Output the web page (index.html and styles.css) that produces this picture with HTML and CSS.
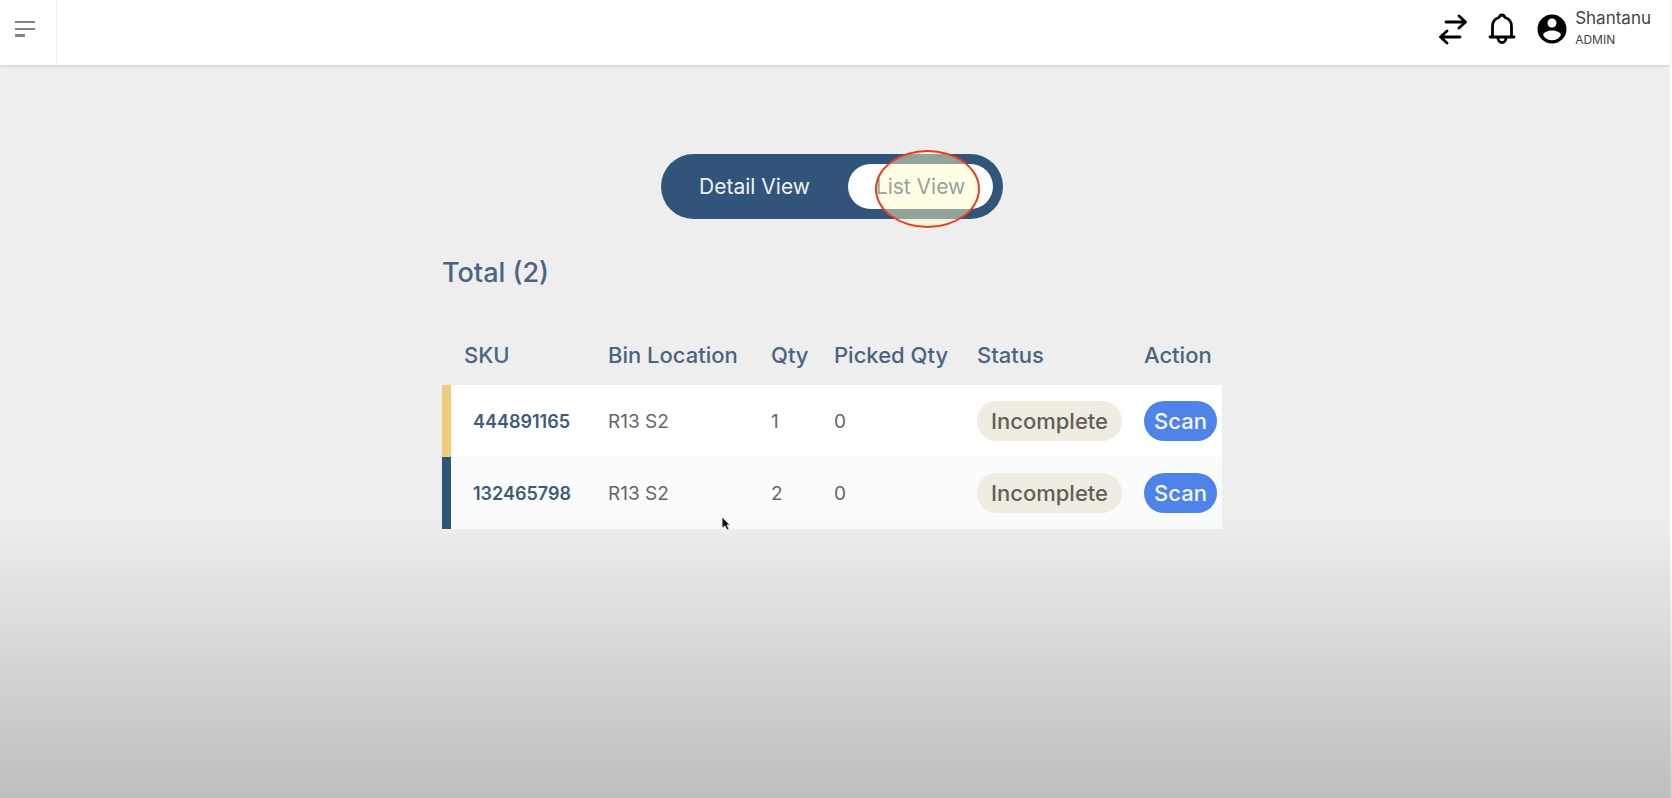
FILE: index.html
```
<!DOCTYPE html>
<html lang="en">
<head>
  <meta charset="UTF-8" />
  <meta name="viewport" content="width=device-width, initial-scale=1.0"/>
  <title>Picklist</title>
  <link rel="stylesheet" href="styles.css">
</head>
<body>

<div class="page">
  <header class="topbar">
    <button type="button" class="menu-btn" aria-label="Menu">
      <svg width="20" height="18" viewBox="0 0 20 18" fill="#858585">
        <path d="M0 1h20v2H0zM0 8h20v2H0zM0 14h10v3H0z"/>
      </svg>
    </button>
    <div class="topbar-right">
      <button type="button" class="icon-btn" aria-label="Switch">
        <svg width="28" height="32" viewBox="0 0 28 32" fill="none" stroke="#000" stroke-width="2.8" stroke-linecap="round" stroke-linejoin="round">
          <path d="M7 9h19M20 3l6.500 6-6.500 6M21 24H2M8 18l-6.500 6L8 30"/>
        </svg>
      </button>
      <button type="button" class="icon-btn" aria-label="Notifications">
        <svg width="28" height="32" viewBox="0 0 28 32" fill="none" stroke="#000" stroke-width="2.8" stroke-linecap="round" stroke-linejoin="round">
          <path d="M2 24h24M4.500 24V13.500C4.500 8.500 7.500 5.500 11 4.500Q12 2 14 2t3 2.500c3.500 1 6.500 4 6.500 9V24"/>
          <path d="M10 25c0 6 8 6 8 0"/>
        </svg>
      </button>
      <div class="user">
        <svg width="30" height="32" viewBox="0 0 30 32">
          <circle cx="15" cy="16" r="14.500" fill="#000"/>
          <circle cx="15" cy="10" r="4.500" fill="#fff"/>
          <path d="M6 22c1.500-6 16.500-6 18 0-3.500 7-14.500 7-18 0z" fill="#fff"/>
        </svg>
        <div class="user-text">
          <span class="user-name">Shantanu</span>
          <span class="user-role">ADMIN</span>
        </div>
      </div>
    </div>
  </header>

  <main class="content">
    <div class="view-toggle">
      <button type="button" class="view-btn">Detail View</button>
      <button type="button" class="view-btn active">List View</button>
      <span class="highlight"></span>
    </div>

    <section class="picklist">
      <h2>Total (2)</h2>
      <table>
        <thead>
          <tr>
            <th class="col-sku">SKU</th>
            <th class="col-bin">Bin Location</th>
            <th class="col-qty">Qty</th>
            <th class="col-picked">Picked Qty</th>
            <th class="col-status">Status</th>
            <th class="col-action">Action</th>
          </tr>
        </thead>
        <tbody>
          <tr class="row-yellow">
            <td>444891165</td>
            <td>R13 S2</td>
            <td>1</td>
            <td>0</td>
            <td><span class="status">Incomplete</span></td>
            <td><button type="button" class="scan-btn">Scan</button></td>
          </tr>
          <tr class="row-blue">
            <td>132465798</td>
            <td>R13 S2</td>
            <td>2</td>
            <td>0</td>
            <td><span class="status">Incomplete</span></td>
            <td><button type="button" class="scan-btn">Scan</button></td>
          </tr>
        </tbody>
      </table>
      <svg class="cursor" width="10" height="16" viewBox="0 0 10 16">
        <path d="M1 1v11l3-2 2 4 2-1-2-4h3z" fill="#111" stroke="#ddd" stroke-width="1"/>
      </svg>
    </section>
  </main>
</div>
<div class="fade"></div>

</body>
</html>
```
FILE: styles.css
```
* {
  box-sizing: border-box;
}
body {
  margin: 0;
  font-family: Inter, "Open Sans", sans-serif;
  background: #fff;
  color: #666;
}
button {
  font-family: inherit;
  border: none;
  background: none;
  padding: 0;
  cursor: pointer;
}
svg {
  display: block;
}
.page {
  display: flex;
  flex-direction: column;
  min-height: 100vh;
  margin-right: 2px;
}
.topbar {
  display: flex;
  justify-content: space-between;
  height: 65px;
  background: #fff;
  box-shadow: 0 1px 3px rgba(0,0,0,0.14);
  z-index: 1;
}
.menu-btn {
  display: flex;
  justify-content: center;
  width: 57px;
  padding: 20px 6px 0 0;
  border-right: 1px solid #f0f0f0;
}
.topbar-right {
  display: flex;
  align-items: flex-start;
  gap: 21px;
  padding: 8px 19px 0 0;
}
.icon-btn {
  padding-top: 5px;
}
.user {
  display: flex;
  gap: 8px;
}
.user svg {
  margin-top: 5px;
}
.user-text {
  display: flex;
  flex-direction: column;
  gap: 4px;
  color: #444;
}
.user-name {
  font-size: 17px;
  line-height: 20px;
}
.user-role {
  font-size: 12px;
  line-height: 16px;
}
.content {
  flex: 1;
  display: flex;
  flex-direction: column;
  align-items: center;
  padding: 89px 6px 0 0;
  background: #eee;
}
.view-toggle {
  position: relative;
  display: flex;
  align-items: center;
  gap: 10px;
  padding: 10px;
  border-radius: 33px;
  background: #31557a;
}
.view-btn {
  width: 167px;
  height: 45px;
  border-radius: 23px;
  font-size: 21px;
  color: #eef2f6;
}
.view-btn.active {
  width: 145px;
  background: #fff;
  color: #31557a;
}
/* ring over the selected view */
.highlight {
  position: absolute;
  top: -4px;
  right: 23px;
  width: 105px;
  height: 78px;
  border: 2px solid #ee3a1c;
  border-radius: 50%;
  background: rgba(255,250,195,0.47);
  pointer-events: none;
}
.picklist {
  position: relative;
  width: 100%;
  max-width: 780px;
}
h2 {
  margin: 36px 0 0;
  font-size: 27px;
  line-height: 36px;
  font-weight: 500;
  color: #4a6482;
}
table {
  width: 100%;
  margin-top: 34px;
  border-spacing: 0;
  table-layout: fixed;
}
th {
  height: 60px;
  padding: 0;
  text-align: left;
  font-size: 22px;
  font-weight: 500;
  color: #4a6482;
}
.col-sku { width: 166px; }
.col-bin { width: 163px; }
.col-qty { width: 63px; }
.col-picked { width: 143px; }
.col-status { width: 167px; }
.col-action { width: 78px; }
td {
  height: 72px;
  padding: 0;
  font-size: 19px;
}
th:first-child,
td:first-child {
  padding-left: 22px;
}
td:first-child {
  border-left: 9px solid #31557a;
  font-size: 18px;
  font-weight: 600;
  color: #3f5b79;
}
.row-yellow {
  background: #fff;
}
.row-blue {
  background: #fafbfb;
}
.row-yellow td:first-child {
  border-left-color: #efcb7b;
}
.status,
.scan-btn {
  display: inline-block;
  height: 40px;
  border-radius: 20px;
  font-size: 22px;
  font-weight: 500;
  line-height: 40px;
  text-align: center;
  vertical-align: middle;
}
.status {
  width: 145px;
  background: #efece2;
  color: #625f59;
}
.scan-btn {
  width: 73px;
  background: #4f83ea;
  color: #f4f8ff;
}
.cursor {
  position: absolute;
  left: 279px;
  bottom: -3px;
}
.fade {
  position: fixed;
  left: 0;
  right: 0;
  bottom: 0;
  height: 35vh;
  background: linear-gradient(rgba(0,0,0,0), rgba(0,0,0,0.2));
  pointer-events: none;
}
```
